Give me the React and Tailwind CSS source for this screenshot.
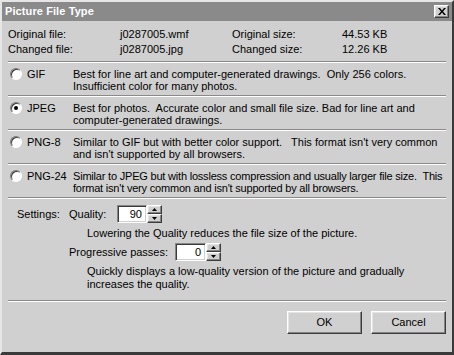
import React from "react";

const raised =
  "border border-t-white border-l-white border-r-[#3c3c3c] border-b-[#3c3c3c] shadow-[inset_-1px_-1px_0_#858585,inset_1px_1px_0_#e4e4e4]";
const sunken =
  "border border-t-[#858585] border-l-[#858585] border-r-white border-b-white shadow-[inset_1px_1px_0_#3c3c3c,inset_-1px_-1px_0_#d0d0d0]";

function Sep() {
  return <div className="h-[2px] shrink-0 border-t border-t-[#8a8a8a] border-b border-b-white" />;
}

function Radio({ checked }) {
  return (
    <div className="w-3 h-3 shrink-0 rounded-full border border-t-[#7a7a7a] border-l-[#7a7a7a] border-r-white border-b-white bg-white flex items-center justify-center shadow-[inset_1px_1px_0_#3c3c3c]">
      {checked && <div className="w-1 h-1 rounded-full bg-black" />}
    </div>
  );
}

function Option({ label, checked, lines, tight }) {
  return (
    <div className="flex pt-[5px] pb-[3px]">
      <div className="w-[65px] shrink-0 flex items-center gap-[5px] h-[12px] pl-[2px] whitespace-nowrap">
        <Radio checked={checked} />
        <span>{label}</span>
      </div>
      <div className={`flex flex-col ${tight ? "tracking-[-0.2px]" : ""}`}>
        {lines.map((l, i) => (
          <div key={i} className="h-[12px] leading-[12px] whitespace-pre">
            {l}
          </div>
        ))}
      </div>
    </div>
  );
}

function Spin({ value, w }) {
  return (
    <div className="flex h-[18px]">
      <div className={`${sunken} ${w} bg-white flex items-center justify-end pr-[4px]`}>{value}</div>
      <div className="flex flex-col w-[15px] h-[18px]">
        <div className={`${raised} bg-[#d0d0d0] h-[9px] flex items-center justify-center`}>
          <svg width="5" height="3" viewBox="0 0 5 3">
            <path d="M2.5 0 L5 3 L0 3 Z" fill="#000" />
          </svg>
        </div>
        <div className={`${raised} bg-[#d0d0d0] h-[9px] flex items-center justify-center`}>
          <svg width="5" height="3" viewBox="0 0 5 3">
            <path d="M0 0 L5 0 L2.5 3 Z" fill="#000" />
          </svg>
        </div>
      </div>
    </div>
  );
}

export default function App() {
  return (
    <div className="w-[454px] h-[355px] bg-[#d0d0d0] font-['Liberation_Sans',Arial,sans-serif] text-[11px] text-black overflow-hidden border-t-2 border-l-2 border-t-[#e6e6e6] border-l-[#e6e6e6] border-r-2 border-b-[3px] border-r-[#3a3a3a] border-b-[#3a3a3a] flex flex-col">
      {/* Title bar */}
      <div className="h-[19px] bg-[#8a8a8a] flex items-center justify-between pl-[3px] pr-[3px] shrink-0">
        <span className="text-white font-bold text-[11px] tracking-[0.1px]">Picture File Type</span>
        <div className={`${raised} bg-[#d0d0d0] w-[15px] h-[13px] flex items-center justify-center`}>
          <svg width="8" height="7" viewBox="0 0 8 7">
            <path d="M0 0 L2 0 L4 2.5 L6 0 L8 0 L5 3.5 L8 7 L6 7 L4 4.5 L2 7 L0 7 L3 3.5 Z" fill="#000" />
          </svg>
        </div>
      </div>

      <div className="flex-1 flex flex-col pl-[6px] pr-[6px]">
        {/* Info */}
        <div className="grid grid-cols-[112px_112px_110px_1fr] pt-[6px] pb-[4px] leading-[15px]">
          <div>Original file:</div>
          <div>j0287005.wmf</div>
          <div>Original size:</div>
          <div>44.53 KB</div>
          <div>Changed file:</div>
          <div>j0287005.jpg</div>
          <div>Changed size:</div>
          <div>12.26 KB</div>
        </div>
        <Sep />
        <Option
          label="GIF"
          lines={[
            "Best for line art and computer-generated drawings.  Only 256 colors.",
            "Insufficient color for many photos.",
          ]}
        />
        <Sep />
        <Option
          label="JPEG"
          checked
          lines={[
            "Best for photos.  Accurate color and small file size. Bad for line art and",
            "computer-generated drawings.",
          ]}
        />
        <Sep />
        <Option
          label="PNG-8"
          lines={[
            "Similar to GIF but with better color support.   This format isn't very common",
            "and isn't supported by all browsers.",
          ]}
        />
        <Sep />
        <Option
          label="PNG-24"
          tight
          lines={[
            "Similar to JPEG but with lossless compression and usually larger file size.  This",
            "format isn't very common and isn't supported by all browsers.",
          ]}
        />
        <Sep />

        {/* Settings */}
        <div className="flex flex-col pt-[6px] pb-[9px]">
          <div className="flex items-center">
            <div className="w-[61px] pl-[9px]">Settings:</div>
            <div className="w-[48px]">Quality:</div>
            <Spin value="90" w="w-[30px]" />
          </div>
          <div className="pl-[79px] mt-[4px] leading-[13px]">
            Lowering the Quality reduces the file size of the picture.
          </div>
          <div className="flex items-center mt-[3px]">
            <div className="w-[167px] pl-[61px]">Progressive passes:</div>
            <Spin value="0" w="w-[31px]" />
          </div>
          <div className="pl-[79px] mt-[4px] leading-[13px]">
            <div>Quickly displays a low-quality version of the picture and gradually</div>
            <div>increases the quality.</div>
          </div>
        </div>
        <Sep />

        {/* Buttons */}
        <div className="flex justify-end gap-[9px] mt-[9px]">
          <button className={`${raised} bg-[#d0d0d0] w-[75px] h-[23px] text-[11px]`}>OK</button>
          <button className={`${raised} bg-[#d0d0d0] w-[75px] h-[23px] text-[11px]`}>Cancel</button>
        </div>
      </div>
    </div>
  );
}
